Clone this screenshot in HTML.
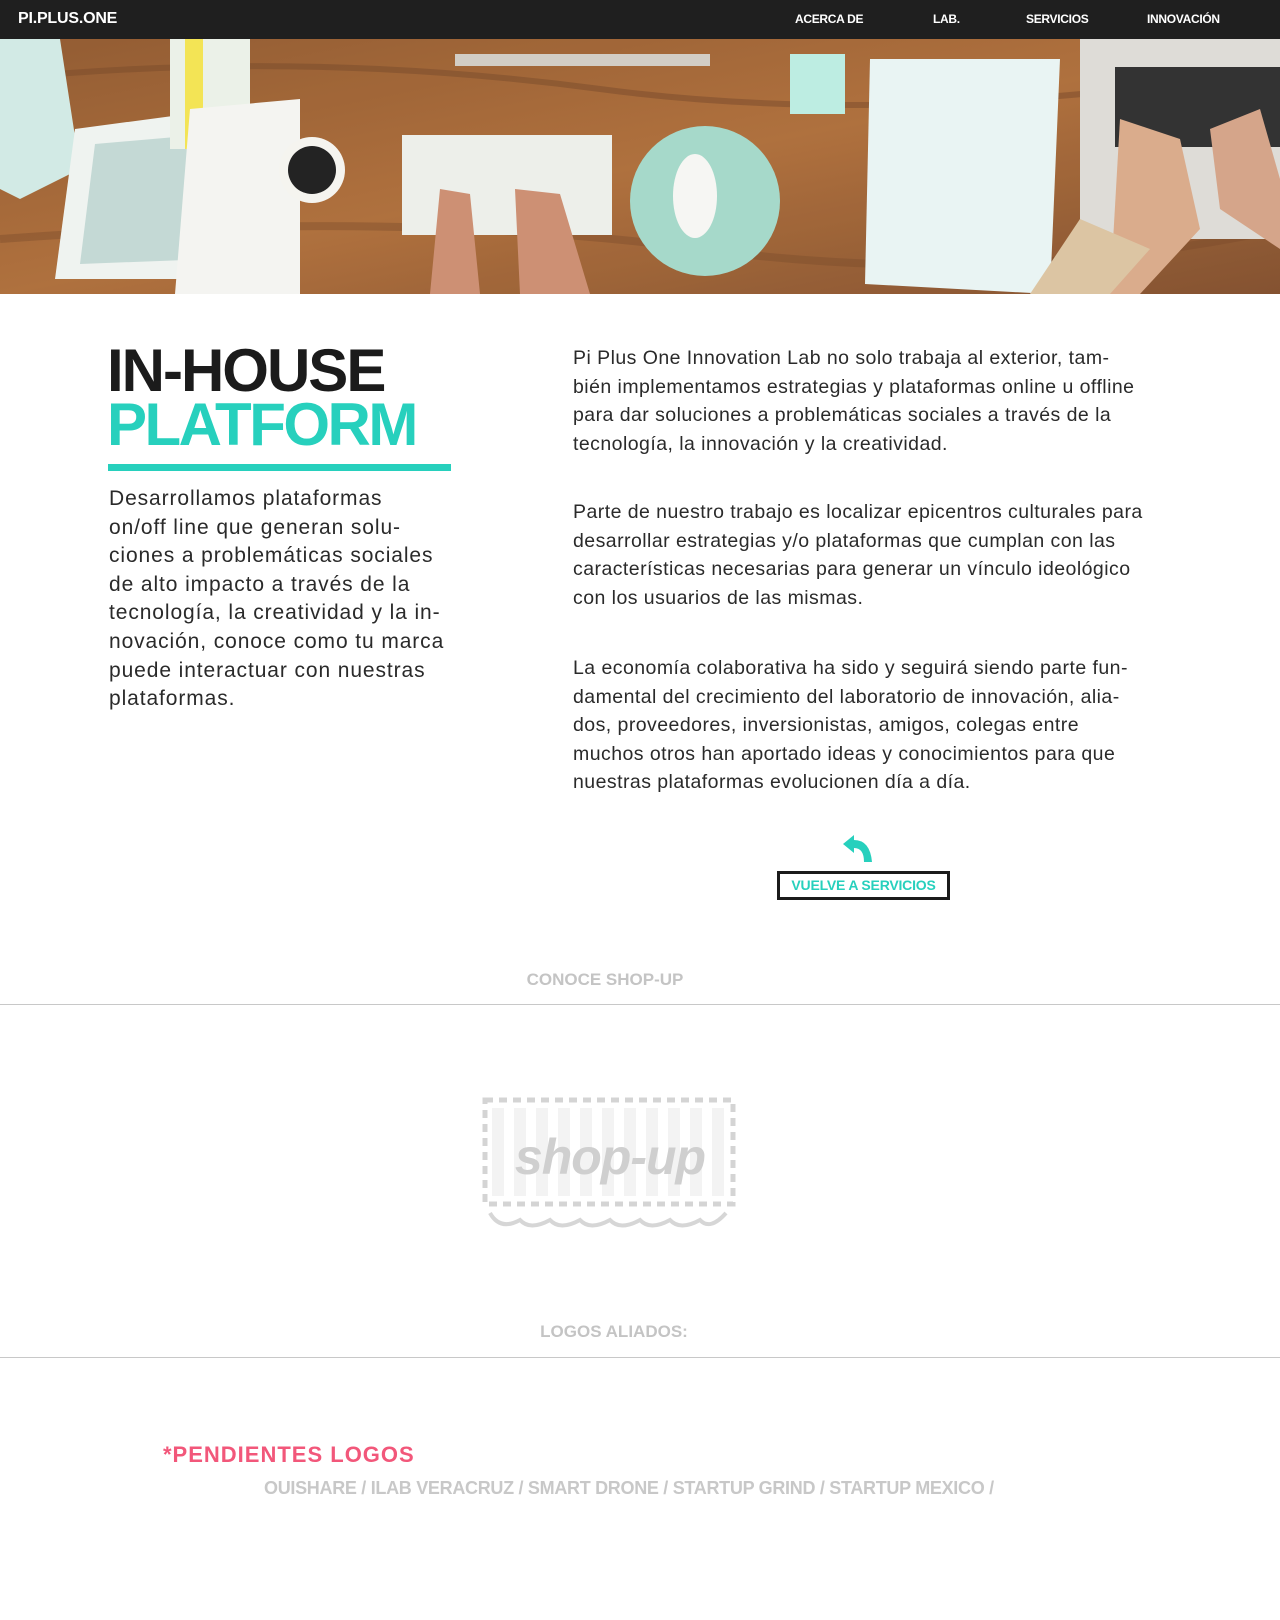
<!DOCTYPE html>
<html><head><meta charset="utf-8"><style>
*{margin:0;padding:0;box-sizing:border-box}
body{width:1280px;height:1620px;background:#fff;font-family:"Liberation Sans",sans-serif;position:relative;overflow:hidden}
.abs{position:absolute;white-space:nowrap}
.nav{position:absolute;left:0;top:0;width:1280px;height:39px;background:#1f1f1f}
.nav span{position:absolute;top:12px;color:#fff;font-weight:bold;font-size:12px;letter-spacing:-0.3px}
.p{position:absolute;font-size:19.5px;line-height:28.6px;color:#2a2a2a;white-space:nowrap;letter-spacing:0.45px}
.p div{height:28.6px}
</style></head><body>
<div class="nav">
<span style="left:18px;top:10px;font-size:16px;letter-spacing:-0.2px">PI.PLUS.ONE</span>
<span style="left:795px">ACERCA DE</span>
<span style="left:933px">LAB.</span>
<span style="left:1026px">SERVICIOS</span>
<span style="left:1147px">INNOVACIÓN</span>
</div>
<svg class="abs" style="left:0;top:39px" width="1280" height="255" viewBox="0 0 1280 255">
<defs><linearGradient id="w" x1="0" y1="0" x2="1" y2="1"><stop offset="0" stop-color="#8a4f22"/><stop offset=".5" stop-color="#a9652e"/><stop offset="1" stop-color="#7a4420"/></linearGradient></defs>
<rect width="1280" height="255" fill="url(#w)"/>
<path d="M0 40 Q300 10 600 50 T1280 30" stroke="#6e3b1a" stroke-width="6" fill="none" opacity=".5"/>
<path d="M0 200 Q400 170 700 210 T1280 190" stroke="#6e3b1a" stroke-width="8" fill="none" opacity=".4"/>
<polygon points="0,0 60,0 80,130 20,160 0,150" fill="#cfe9e3"/>
<polygon points="75,90 225,70 230,240 55,240" fill="#eef2ef"/>
<polygon points="95,105 210,95 212,220 80,225" fill="#bfd6d2"/>
<rect x="170" y="0" width="80" height="110" fill="#eaf0e6"/>
<rect x="185" y="0" width="18" height="110" fill="#f2e247"/>
<polygon points="190,70 300,60 300,255 175,255" fill="#f4f4f0"/>
<circle cx="312" cy="131" r="33" fill="#f5f3ee"/><circle cx="312" cy="131" r="24" fill="#111"/>
<rect x="402" y="96" width="210" height="100" fill="#eceee9"/>
<path d="M430 255 L440 150 L470 155 L480 255Z M520 255 L515 150 L560 155 L590 255Z" fill="#c98769"/>
<ellipse cx="705" cy="162" rx="75" ry="75" fill="#9fd6c6"/>
<ellipse cx="695" cy="157" rx="22" ry="42" fill="#f6f6f2"/>
<rect x="455" y="15" width="255" height="12" fill="#cfc9c0"/>
<rect x="790" y="15" width="55" height="60" fill="#b8ece0"/>
<polygon points="870,20 1060,20 1050,255 865,245" fill="#e8f3f2"/>
<rect x="1080" y="0" width="200" height="200" fill="#dcdad4"/>
<rect x="1115" y="28" width="165" height="80" fill="#222"/>
<path d="M1110 255 L1120 80 L1180 100 L1200 190 L1140 255Z" fill="#d7a583"/>
<path d="M1210 90 L1260 70 L1280 140 L1280 210 L1220 170Z" fill="#d29e80"/>
<polygon points="1030,255 1080,180 1150,210 1110,255" fill="#d9c19c"/>
<rect x="0" y="0" width="1280" height="255" fill="#fff" opacity=".08"/>
</svg>

<div class="abs" style="left:107px;top:344px;font-size:60px;font-weight:bold;line-height:54px;color:#1b1b1b;letter-spacing:-2px">IN-HOUSE</div>
<div class="abs" style="left:107px;top:398px;font-size:60px;font-weight:bold;line-height:54px;color:#27d0bd;letter-spacing:-2.5px">PLATFORM</div>
<div class="abs" style="left:108px;top:464px;width:343px;height:7px;background:#27d0bd"></div>

<div class="p" style="left:109px;top:485px;font-size:21px;letter-spacing:0.9px;color:#2a2a2a">
<div>Desarrollamos plataformas</div><div>on/off line que generan solu-</div><div>ciones a problemáticas sociales</div><div>de alto impacto a través de la</div><div>tecnología, la creatividad y la in-</div><div>novación, conoce como tu marca</div><div>puede interactuar con nuestras</div><div>plataformas.</div></div>

<div class="p" style="left:573px;top:344px"><div>Pi Plus One Innovation Lab no solo trabaja al exterior, tam-</div><div>bién implementamos estrategias y plataformas online u offline</div><div>para dar soluciones a problemáticas sociales a través de la</div><div>tecnología, la innovación y la creatividad.</div></div>
<div class="p" style="left:573px;top:498px"><div>Parte de nuestro trabajo es localizar epicentros culturales para</div><div>desarrollar estrategias y/o plataformas que cumplan con las</div><div>características necesarias para generar un vínculo ideológico</div><div>con los usuarios de las mismas.</div></div>
<div class="p" style="left:573px;top:654px"><div>La economía colaborativa ha sido y seguirá siendo parte fun-</div><div>damental del crecimiento del laboratorio de innovación, alia-</div><div>dos, proveedores, inversionistas, amigos, colegas entre</div><div>muchos otros han aportado ideas y conocimientos para que</div><div>nuestras plataformas evolucionen día a día.</div></div>

<svg class="abs" style="left:843px;top:835px" width="32" height="28" viewBox="0 0 32 28"><path d="M0 9 L11 0 L11 5 Q27 5 29 27 L21 27 Q21 13 11 13 L11 18 Z" fill="#27d0bd"/></svg>
<div class="abs" style="left:777px;top:871px;width:173px;height:29px;border:3px solid #1b1b1b;color:#27d0bd;font-weight:bold;font-size:14px;text-align:center;line-height:23px;letter-spacing:-0.2px">VUELVE A SERVICIOS</div>

<div class="abs" style="left:0;width:1210px;top:970px;text-align:center;color:#c4c4c4;font-weight:bold;font-size:17px">CONOCE SHOP-UP</div>
<div class="abs" style="left:0;top:1004px;width:1280px;height:1px;background:#c8c8c8"></div>

<svg class="abs" style="left:480px;top:1095px" width="260" height="140" viewBox="0 0 260 140">
<g fill="#f3f3f3"><rect x="12" y="13" width="12" height="88"/><rect x="34" y="13" width="12" height="88"/><rect x="56" y="13" width="12" height="88"/><rect x="78" y="13" width="12" height="88"/><rect x="100" y="13" width="12" height="88"/><rect x="122" y="13" width="12" height="88"/><rect x="144" y="13" width="12" height="88"/><rect x="166" y="13" width="12" height="88"/><rect x="188" y="13" width="12" height="88"/><rect x="210" y="13" width="12" height="88"/><rect x="232" y="13" width="12" height="88"/></g>
<rect x="5" y="5" width="248" height="104" fill="none" stroke="#d4d4d4" stroke-width="5" stroke-dasharray="8 6"/>
<text x="130" y="79" text-anchor="middle" font-family="Liberation Sans" font-weight="bold" font-style="italic" font-size="50" fill="#cfcfcf" letter-spacing="-1">shop-up</text>
<path d="M10 118 Q20 136 40 125 Q50 136 70 125 Q80 136 100 125 Q110 136 130 125 Q140 136 160 125 Q170 136 190 125 Q200 136 220 125 Q230 136 246 118" fill="none" stroke="#d6d6d6" stroke-width="4"/>
</svg>

<div class="abs" style="left:0;width:1228px;top:1322px;text-align:center;color:#c4c4c4;font-weight:bold;font-size:17px">LOGOS ALIADOS:</div>
<div class="abs" style="left:0;top:1357px;width:1280px;height:1px;background:#c8c8c8"></div>

<div class="abs" style="left:163px;top:1442px;color:#f2577a;font-weight:bold;font-size:22px;letter-spacing:1px">*PENDIENTES LOGOS</div>
<div class="abs" style="left:264px;top:1478px;color:#c8c8c8;font-weight:bold;font-size:18px;letter-spacing:-0.3px">OUISHARE / ILAB VERACRUZ / SMART DRONE / STARTUP GRIND / STARTUP MEXICO /</div>
</body></html>
